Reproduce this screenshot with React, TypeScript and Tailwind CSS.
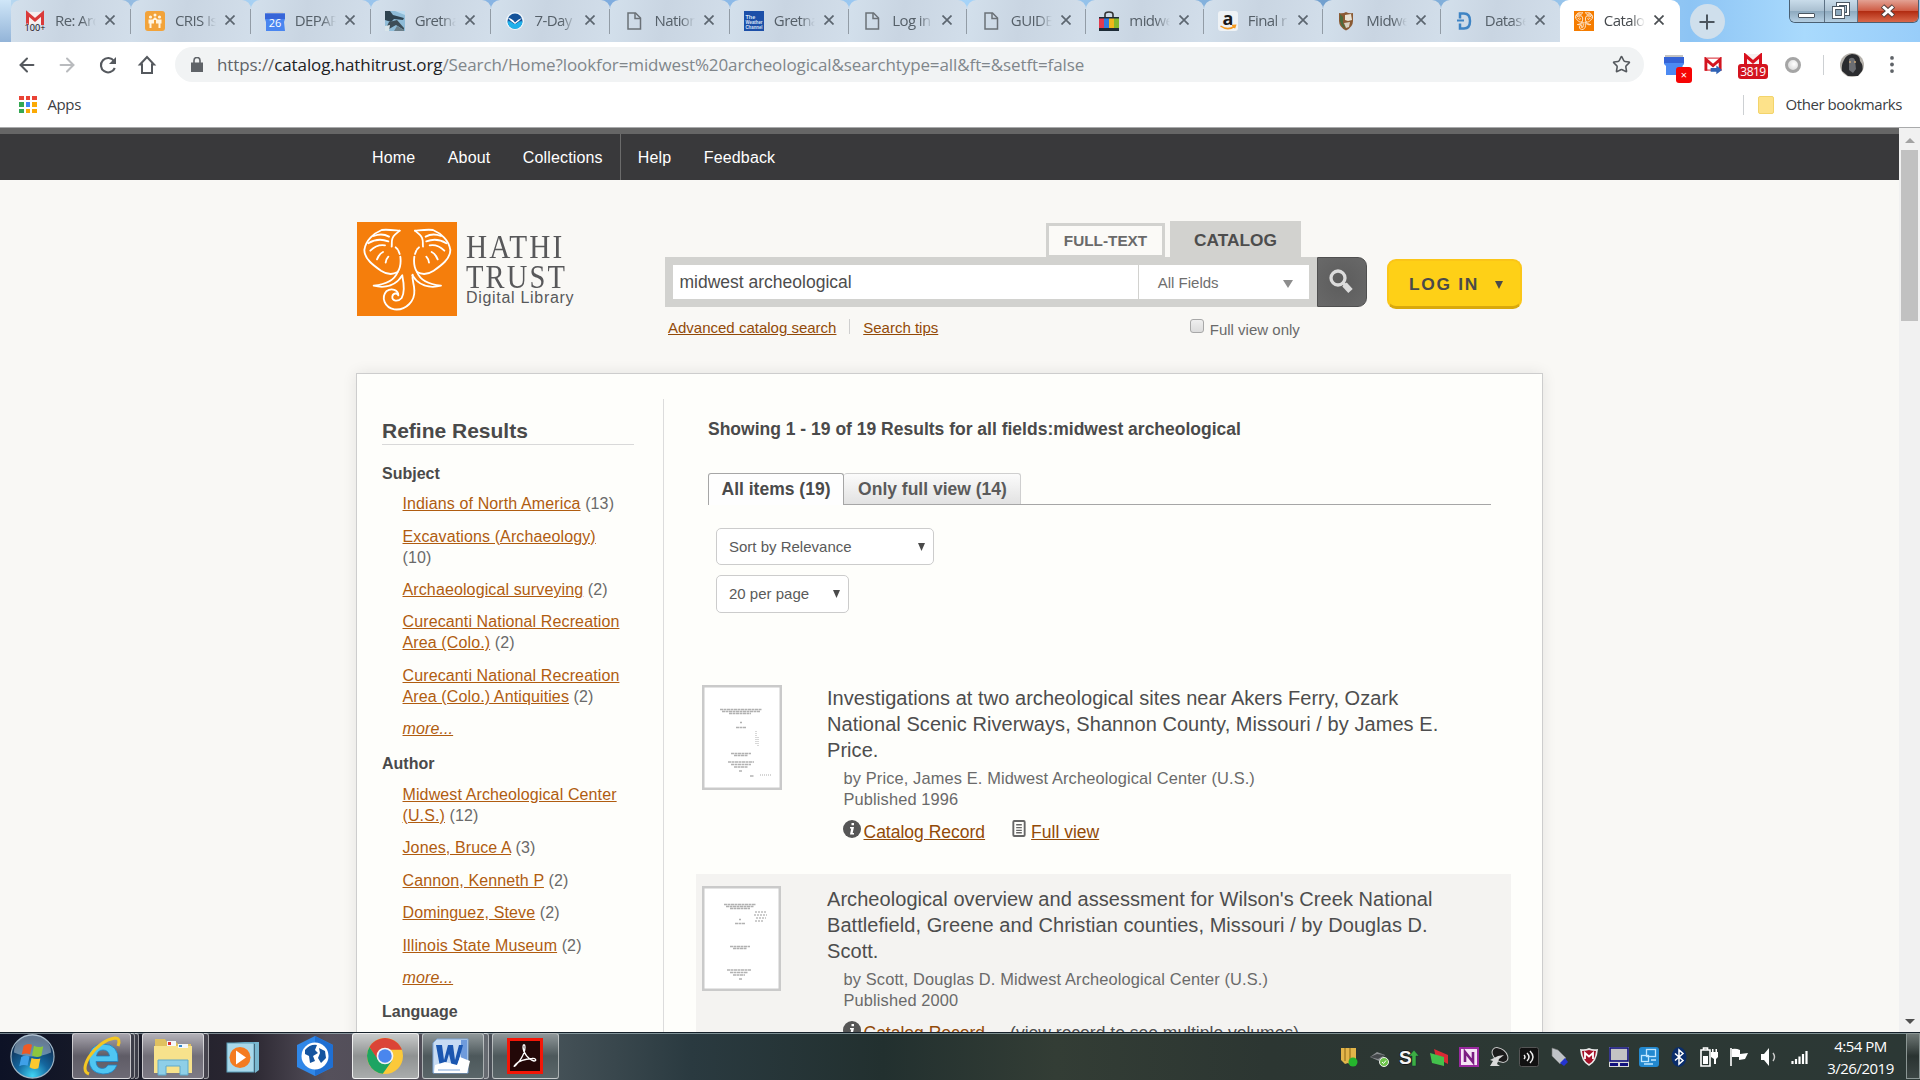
import React from "react";
import { ArrowLeft, ArrowRight, Star } from "lucide-react";

type Kids = { children?: React.ReactNode };

/* ---------- favicons ---------- */

const PageIcon = () => (
  <svg viewBox="0 0 20 20" className="size-5" fill="none" stroke="#6b7177" strokeWidth="1.5">
    <path d="M4 2h7.500l5 5v11h-12.500z" />
    <path d="M11 2v5.500h5.500" />
  </svg>
);

const Elephant = ({ w }: { w: number }) => (
  <g fill="none" stroke="#fff" strokeWidth={w} strokeLinecap="round" strokeLinejoin="round">
    <path d="M128 26 C105 24 90 22 74 24 C50 34 26 55 22 84 C22 112 52 132 72 146 C90 158 108 158 122 150 C130 138 132 120 130 104" />
    <path d="M128 26 L114 38 C100 50 106 62 104 74" />
    <path d="M50 42 Q75 32 96 44 M34 64 Q62 46 94 58 M40 86 Q60 66 84 70 M60 112 Q66 96 78 90 M86 122 Q88 110 94 104 M116 76 L122 82 M124 86 L128 96" />
    <path d="M174 26 C197 24 212 22 228 24 C252 34 276 55 280 84 C280 112 250 132 230 146 C212 158 194 158 180 150 C172 138 170 120 172 104" />
    <path d="M174 26 L188 38 C202 50 196 62 198 74" />
    <path d="M252 42 Q227 32 206 44 M268 64 Q240 46 208 58 M262 86 Q242 66 218 70 M242 112 Q236 96 224 90 M216 122 Q214 110 208 104 M186 76 L180 82 M178 86 L174 96" />
    <path d="M122 150 C112 176 80 188 50 191 C86 200 118 190 136 160" />
    <path d="M180 150 C190 176 222 188 252 191 C216 200 184 190 166 160" />
    <path d="M136 162 C142 190 142 214 134 228 C124 240 104 238 106 224 C108 212 120 212 124 220 C124 204 104 196 88 208 C72 226 82 256 112 262 C148 266 174 236 172 206 C172 184 164 176 167 158" />
  </g>
);

const ElephantFav = () => (
  <svg viewBox="0 0 300 282" preserveAspectRatio="none" className="size-5">
    <rect width="300" height="282" fill="#f57c00" />
    <g opacity=".85">
      <Elephant w={13} />
    </g>
  </svg>
);

const MailM = ({ c = "#d93a3a" }: { c?: string }) => (
  <>
    <rect x="1" y="1" width="18" height="13" fill="#f6f0f0" />
    <path d="M2.500 14V2.500L10 9l7.500-6.500V14" fill="none" stroke={c} strokeWidth="3" />
  </>
);

const favs: Record<string, React.ReactNode> = {
  mail: (
    <svg viewBox="0 0 20 20" className="size-5 overflow-visible">
      <MailM />
      <text x="-0.500" y="19.500" fontSize="9.500" fontFamily="Open Sans" fill="#111" textLength="21" lengthAdjust="spacingAndGlyphs" stroke="#dde" strokeWidth="1" paintOrder="stroke">100+</text>
    </svg>
  ),
  cris: (
    <svg viewBox="0 0 20 20" className="size-5">
      <rect width="20" height="20" rx="3" fill="#f2a33a" />
      <g fill="#fff4df">
        <circle cx="5.500" cy="6" r="1.600" /><circle cx="10" cy="4" r="1.500" /><circle cx="14.500" cy="6" r="1.600" />
        <path d="M3.500 8.500h4l2-2h1l2 2h4v4h-1V17h-2v-4.500h-2.500V9h-2v3.500H6.500V17h-2v-4.500h-1z" />
      </g>
    </svg>
  ),
  cal: (
    <svg viewBox="0 0 20 20" className="size-5">
      <path d="M2 1h16v2H2z" fill="#cfcfcf" />
      <path d="M0 2.500h20V8l-1 3 1 9H1V11L0 8z" fill="#4a86f0" />
      <path d="M0 2.500h20V8H0z" fill="#3765d8" />
      <text x="10" y="15.500" textAnchor="middle" fontSize="11" fontFamily="Open Sans" fill="#fff">26</text>
    </svg>
  ),
  photo: (
    <svg viewBox="0 0 20 20" className="size-5">
      <rect width="20" height="20" fill="#8fbcd8" />
      <path d="M0 0h5l3 4 11 3-1 2-9-1-3 3-6-2z" fill="#2f4350" />
      <path d="M4 11l8-2 7 8v2l-8-5-7 4-4 1z" fill="#3d4d57" />
      <path d="M12 15l7 4v1H9z" fill="#6b7f89" /><path d="M0 15l5-1-1 6H0z" fill="#d9e5ea" /><path d="M10 0h10v4z" fill="#bddcf0" />
    </svg>
  ),
  noaa: (
    <svg viewBox="0 0 20 20" className="size-5">
      <circle cx="10" cy="10" r="9" fill="#eef6fb" /><circle cx="10" cy="10" r="7.500" fill="#14539a" />
      <path d="M2.500 10.500C6 9 8 13 10 13s4-4 7.500-2.500A7.500 7.500 0 0 1 2.500 10.500z" fill="#1fb0ea" />
      <path d="M3 7q4 0 7 4.500Q13 8 17 7l-3 3-4 3-4-3z" fill="#fff" />
    </svg>
  ),
  page: <PageIcon />,
  weather: (
    <svg viewBox="0 0 20 20" className="size-5">
      <rect width="20" height="20" fill="#1c4fa8" />
      <g fontSize="5.500" fontWeight="bold" fontFamily="Liberation Sans" fill="#d8e4f6">
        <text x="1.500" y="8">The</text><text x="1.500" y="13" textLength="17" lengthAdjust="spacingAndGlyphs">Weather</text><text x="1.500" y="18" textLength="17" lengthAdjust="spacingAndGlyphs">Channel</text>
      </g>
    </svg>
  ),
  ebay: (
    <svg viewBox="0 0 20 20" className="size-5">
      <path d="M6 7V3.500Q6 1 10 1t4 2.500V7" fill="none" stroke="#333" strokeWidth="1.600" />
      <path d="M0 6h20v3H0z" fill="#1d2b36" /><path d="M0 7.500h5V17H0z" fill="#e23b4e" /><path d="M5 7.500h5V17H5z" fill="#2f7ae0" />
      <path d="M10 7.500h5V17h-5z" fill="#efb71b" /><path d="M15 7.500h5V17h-5z" fill="#86b82c" /><path d="M0 17h20v3H0z" fill="#1d2b36" />
    </svg>
  ),
  amazon: (
    <svg viewBox="0 0 20 20" className="size-5">
      <rect width="20" height="20" rx="3" fill="#eef2f5" />
      <text x="10" y="14" textAnchor="middle" fontSize="18" fontWeight="bold" fontFamily="Open Sans" fill="#1a1a1a">a</text>
      <path d="M2.500 15q7 5 14 .5M14 14.500l3.500-.2-1 3" fill="none" stroke="#f59a1f" strokeWidth="1.500" />
    </svg>
  ),
  nps: (
    <svg viewBox="0 0 20 20" className="size-5">
      <path d="M3 2q4 1 7-1 3 2 7 1v8q0 6-7 9.500Q3 16 3 10z" fill="#8a5a33" />
      <path d="M9 4l6-1 1 6-4 1-3-1z" fill="#e9e3d5" /><path d="M4 3l3 3v6l3 6-4-3-2-5z" fill="#4c6b3c" /><path d="M8 12l6-1-1 5-3 1z" fill="#d8d1c0" />
    </svg>
  ),
  data: (
    <svg viewBox="0 0 20 20" className="size-5" fill="none" stroke="#3f84c4" strokeWidth="2.500">
      <path d="M5 7.500V2.500h4q6 0 6 7.500t-6 7.500H5v-5" /><path d="M2 9.500h7" strokeWidth="2" />
    </svg>
  ),
  hathi: <ElephantFav />,
};

const tabs: [string, string][] = [
  ["mail", "Re: Arc"], ["cris", "CRIS Is."], ["cal", "DEPAR"], ["photo", "Gretna"], ["noaa", "7-Day"], ["page", "Nation"],
  ["weather", "Gretna"], ["page", "Log in"], ["page", "GUIDE"], ["ebay", "midwe"], ["amazon", "Final r"], ["nps", "Midwe"], ["data", "Datase"],
];

const TabX = ({ dark }: { dark?: boolean }) => (
  <svg viewBox="0 0 10 10" className="size-[10px] shrink-0" stroke={dark ? "#4a4e52" : "#5c6670"} strokeWidth="1.700">
    <path d="M.5.5l9 9M9.500.5l-9 9" />
  </svg>
);

const TabBody = ({ icon, text, active }: { icon: string; text: string; active?: boolean }) => (
  <>
    {favs[icon]}
    <span className={active
      ? "ml-[10px] w-[41px] overflow-hidden whitespace-nowrap text-[15px] tracking-[-0.6px] text-[#45494d] [mask-image:linear-gradient(90deg,#000_65%,transparent)]"
      : "ml-[10px] w-[41px] overflow-hidden whitespace-nowrap text-[15px] tracking-[-0.6px] text-[#566069] [mask-image:linear-gradient(90deg,#000_65%,transparent)]"}>
      {text}
    </span>
    <span className="ml-[9px] pb-px"><TabX dark={active} /></span>
  </>
);

const TabStrip = () => (
  <div className="relative flex h-[42px] bg-[linear-gradient(90deg,#bcdcf3_0,#8fb6dd_5%,#a9d3f5_14%,#7ba8dc_30%,#a6d4f9_50%,#6f9dcc_70%,#a0cdf2_84%,#8dc4f4_88%,#a9dafd_94%,#98cdf9_100%)] font-['Open_Sans',sans-serif]">
    <div className="w-[11px] shrink-0 bg-[linear-gradient(#cfe6f8,#93b4d8)]" />
    {tabs.map(([icon, t], i) => (
      <div key={i} className={i < 6
        ? "relative flex h-[42px] w-[119.900px] shrink-0 items-center rounded-t-[9px] bg-[linear-gradient(100deg,#d3e0ec,#c9d5e2_45%,#d2deea)] pb-px pl-[14px]"
        : "relative flex h-[42px] w-[118.500px] shrink-0 items-center rounded-t-[9px] bg-[linear-gradient(100deg,#d3e0ec,#c9d5e2_45%,#d2deea)] pb-px pl-[13.500px]"}>
        <TabBody icon={icon} text={t} />
        {i < 12 && <div className="absolute top-[9px] right-0 h-[25px] w-px bg-[#929ca6]" />}
      </div>
    ))}
    <div className="flex h-[42px] w-[120px] shrink-0 items-center rounded-t-[9px] bg-white pb-px pl-[14px]">
      <TabBody icon="hathi" text="Catalog" active />
    </div>
    <div className="mt-1 ml-[10px] flex size-[35px] items-center justify-center rounded-full bg-[#cfdfec]">
      <svg viewBox="0 0 16 16" className="size-4" stroke="#4b555e" strokeWidth="2"><path d="M8 .5v15M.5 8h15" /></svg>
    </div>
    <div className="ml-[64px] flex h-[23px] overflow-hidden rounded-b-[6px] border border-t-0 border-[#4a6073]">
      <div className="flex w-[35px] items-end justify-center border-r border-[#5d7285] bg-[linear-gradient(#c9dcea,#a9bfd0_50%,#8da9be_51%,#b5cfe2)] pb-1">
        <div className="h-[5px] w-[17px] rounded-[1px] border border-[#4a5661] bg-white" />
      </div>
      <div className="flex w-[33px] items-center justify-center border-r border-[#5d7285] bg-[linear-gradient(#c9dcea,#a9bfd0_50%,#8da9be_51%,#b5cfe2)] pb-px">
        <svg viewBox="0 0 18 17" className="h-[17px] w-[18px]" fill="none">
          <path d="M6 2h10v10H6z" stroke="#4a5661" strokeWidth="4" /><path d="M6 2h10v10H6z" stroke="#fff" strokeWidth="2" />
          <path d="M2 6h9v9H2z" fill="#8da9be" stroke="#4a5661" strokeWidth="4" /><path d="M2 6h9v9H2z" stroke="#fff" strokeWidth="2.200" />
        </svg>
      </div>
      <div className="flex w-[60px] items-center justify-center bg-[linear-gradient(#e3a294,#cf5d46_48%,#b22c12_52%,#d9684a)]">
        <svg viewBox="0 0 16 14" className="h-[14px] w-4">
          <path d="M2.500 2l11 10M13.500 2l-11 10" stroke="#55423f" strokeWidth="5" /><path d="M3 2.500l10 9M13 2.500l-10 9" stroke="#fff" strokeWidth="3" />
        </svg>
      </div>
    </div>
  </div>
);

const Toolbar = () => (
  <div className="flex h-[45px] items-center bg-white pl-[16px]">
    <ArrowLeft className="size-[22px] text-[#55595e]" strokeWidth={2.200} />
    <ArrowRight className="ml-[18px] size-[22px] text-[#b9bbbe]" strokeWidth={2.200} />
    <svg viewBox="0 0 20 20" className="ml-[20px] size-5" fill="none" stroke="#55595e" strokeWidth="2.100">
      <path d="M16.800 13A7.200 7.200 0 1 1 16 6" /><path d="M18 2v7h-7z" fill="#55595e" stroke="none" />
    </svg>
    <svg viewBox="0 0 20 20" className="ml-[19px] size-5" fill="none" stroke="#55595e" strokeWidth="2">
      <path d="M3 9.500L10 2l7 7.500H15V18H5V9.500z" />
    </svg>
    <div className="ml-[18px] flex h-[35px] w-[1469px] items-center rounded-full bg-[#f1f3f4] pl-4">
      <svg viewBox="0 0 12 15" className="h-[15px] w-3"><path d="M0 5.500h12V15H0z" fill="#5f6368" /><path d="M3 6V3.500a3 3 0 0 1 6 0V6" fill="none" stroke="#5f6368" strokeWidth="1.600" /></svg>
      <span className="ml-[14px] w-[1395px] whitespace-nowrap font-['Open_Sans',sans-serif] text-[17px] tracking-[-0.100px] text-[#80868b]">
        <span className="text-[#5f6368]">https://</span><span className="text-[#202124]">catalog.hathitrust.org</span>/Search/Home?lookfor=midwest%20archeological&amp;searchtype=all&amp;ft=&amp;setft=false
      </span>
      <Star className="size-[19px] shrink-0 text-[#55595e]" strokeWidth={2} />
    </div>
    <div className="relative ml-5 h-7 w-7">
      <svg viewBox="0 0 20 20" className="mt-[4px] size-5"><path d="M1 0h18v3H1z" fill="#c3c3c3" /><path d="M0 2h20v7l-1.500 2v9H2v-9L0 9z" fill="#4c8af2" /><path d="M0 2h20v6H0z" fill="#3563d6" /></svg>
      <div className="absolute top-[16px] left-[12px] flex size-[16px] items-center justify-center rounded-[3px] bg-[#f60404] font-['Open_Sans'] text-[11px] leading-none text-white">×</div>
    </div>
    <svg viewBox="0 0 20 18" className="mt-[2px] ml-[12px] h-[18px] w-[19px]">
      <rect x="1" y=".5" width="17" height="13" fill="#fff" /><path d="M2 14V2l7.500 6.500L17 2v12" fill="none" stroke="#d3141f" strokeWidth="3" /><path d="M1 .7h17M1 13.300h10" stroke="#d3141f" strokeWidth="1" />
      <path d="M7 11h6V8.500l6 4.700-6 4.500V15H7z" fill="#2f62b5" />
    </svg>
    <div className="relative ml-[15px] h-[24px] w-[30px]">
      <svg viewBox="0 0 20 14" className="ml-[5px] h-[14px] w-5"><MailM c="#d9101d" /></svg>
      <div className="absolute top-[11px] left-0 h-[15px] w-[30px] rounded-[3px] bg-[#d3141f] text-center font-['Open_Sans'] text-[12px] leading-[15px] tracking-[-0.500px] text-white">3819</div>
    </div>
    <div className="ml-[17px] h-4 w-4 rounded-full border-[3px] border-[#a5a5a5] bg-[radial-gradient(circle_at_60%_40%,#fff,#cfcfcf)]" />
    <div className="ml-[22px] h-5 w-px bg-[#cdd0d3]" />
    <svg viewBox="0 0 24 24" className="ml-4 size-6">
      <circle cx="12" cy="12" r="12" fill="#b5b1ab" /><path d="M2 18Q1 12 4 7 6 2 12 1q8 0 8 7 4 5 2 10l-4 5H8z" fill="#2b2c2f" />
      <path d="M9 6q4-3 6 1l1 9-3 4-4-3z" fill="#6b6d72" /><circle cx="10" cy="9" r="1" fill="#c9a77a" /><circle cx="15" cy="9" r="1" fill="#c9a77a" />
    </svg>
    <svg viewBox="0 0 4 18" className="ml-[26px] h-[17px] w-1" fill="#5f6368"><circle cx="2" cy="2" r="2" /><circle cx="2" cy="9" r="2" /><circle cx="2" cy="16" r="2" /></svg>
  </div>
);

const appDots = ["bg-[#ea4335]", "bg-[#ea4335]", "bg-[#ea4335]", "bg-[#34a853]", "bg-[#4285f4]", "bg-[#fbaa05]", "bg-[#34a853]", "bg-[#fbaa05]", "bg-[#fbaa05]"];

const Bookmarks = () => (
  <div className="flex h-[40px] items-center bg-white pr-[18px] pb-[5px] pl-[19px] font-['Open_Sans',sans-serif] text-[15px] text-[#3c4043]">
    <div className="grid grid-cols-3 gap-[2px]">
      {appDots.map((c, i) => <div key={i} className={`size-[4.500px] ${c}`} />)}
    </div>
    <span className="ml-[11px] tracking-[-0.400px]">Apps</span>
    <div className="ml-auto h-5 w-px bg-[#cdd0d3]" />
    <div className="mr-[12px] ml-[14px] h-[18px] w-4 rounded-[2px] border border-[#f3d46b] bg-[#fde28a]" />
    <span className="whitespace-nowrap tracking-[-0.450px]">Other bookmarks</span>
  </div>
);

/* ---------- catalog page ---------- */

const NavItem = ({ children }: Kids) => <span className="mr-[32.500px] text-white">{children}</span>;

const Header = () => (
  <div className="flex h-[193px] pt-[42px] pl-[357px]">
    <div className="flex w-[308px]">
      <svg viewBox="0 0 300 282" preserveAspectRatio="none" className="h-[94px] w-[100px]">
        <rect width="300" height="282" fill="#f57e0c" />
        <Elephant w={5.500} />
      </svg>
      <div className="ml-[9px] whitespace-nowrap pt-[10px] text-[#58585a]">
        <div className="h-[30px] w-[100px] origin-left [transform:scaleX(0.86)] font-['Liberation_Serif',serif] text-[34px] leading-[30px] tracking-[2.500px]">HATHI</div>
        <div className="h-[29px] w-[100px] origin-left [transform:scaleX(0.84)] font-['Liberation_Serif',serif] text-[34px] leading-[29px] tracking-[2.500px]">TRUST</div>
        <div className="h-[14px] text-[16px] leading-[14px] tracking-[0.700px]">Digital Library</div>
      </div>
    </div>
    <div className="w-[702px]">
      <div className="flex h-[35px] items-end pl-[381px] font-bold">
        <div className="flex h-[34px] w-[119px] items-center justify-center border-3 border-b-2 border-[#d2d2cf] bg-[#fbfaf7] pt-px text-[15.300px] text-[#6a6a6a]">FULL-TEXT</div>
        <div className="ml-[5px] flex h-9 w-[131px] items-center justify-center bg-[#d2d2cf] pt-[3px] text-[17.300px] text-[#4d4d4d]">CATALOG</div>
      </div>
      <div className="flex">
        <div className="flex h-[50px] w-[652px] bg-[#d2d2cf] p-2">
          <div className="flex h-[34px] w-[466px] items-center bg-white pl-[6.500px] text-[17.500px] text-[#4d4d4d]">midwest archeological</div>
          <div className="ml-px flex h-[34px] w-[170px] items-center bg-white pt-[2px] pr-4 pl-[18.500px] text-[15px] text-[#6e6e6e]">
            All Fields
            <svg viewBox="0 0 10 8" className="mt-px ml-auto h-2 w-[10px]"><path d="M0 0h10L5 8z" fill="#8d8d8d" /></svg>
          </div>
        </div>
        <div className="flex h-[50px] w-[50px] justify-center rounded-r-[9px] border border-[#505050] bg-[radial-gradient(#5c5c5c,#696969)] pt-[11px] pr-[2px]">
          <svg viewBox="0 0 26 26" className="size-[26px]" fill="none" stroke="#dcdcdc">
            <circle cx="10" cy="9" r="7" strokeWidth="3.300" /><path d="M15 14l2 2" strokeWidth="3.500" /><path d="M16.500 15.500l6 6.500" strokeWidth="6" />
          </svg>
        </div>
      </div>
      <div className="flex pt-[12px] text-[15px] leading-[17px]">
        <span className="ml-[3px] text-[#924a08] underline">Advanced catalog search</span>
        <span className="mx-[12.900px] h-[15px] w-px bg-[#cfcfcf]" />
        <span className="text-[#924a08] underline">Search tips</span>
        <span className="ml-[251.500px] h-[14px] w-[14px] rounded-[3px] border border-[#a8a8a8] bg-[linear-gradient(#efefef,#dcdcdc)]" />
        <span className="mt-[2px] ml-[6px] text-[#6a6a6a]">Full view only</span>
      </div>
    </div>
    <div className="mt-[37px] ml-5 flex h-[50px] w-[135px] items-center rounded-[9px] border-2 border-b-[3px] border-[#fbc617] border-b-[#d9a90c] bg-[#fed017] pt-[2px] pl-5 text-[17.400px] font-bold tracking-[1.700px] text-[#4a4a4a]">
      LOG IN
      <svg viewBox="0 0 8 8" className="ml-[16px] size-2"><path d="M0 0h8L4 8z" fill="#4a4a4a" /></svg>
    </div>
  </div>
);

type Facet = [lines: string[], count: string, own?: boolean];

const subjects: Facet[] = [
  [["Indians of North America"], "(13)"],
  [["Excavations (Archaeology)"], "(10)", true],
  [["Archaeological surveying"], "(2)"],
  [["Curecanti National Recreation", "Area (Colo.)"], "(2)"],
  [["Curecanti National Recreation", "Area (Colo.) Antiquities"], "(2)"],
];
const authors: Facet[] = [
  [["Midwest Archeological Center", "(U.S.)"], "(12)"],
  [["Jones, Bruce A"], "(3)"],
  [["Cannon, Kenneth P"], "(2)"],
  [["Dominguez, Steve"], "(2)"],
  [["Illinois State Museum"], "(2)"],
];

const FacetList = ({ title, items }: { title: string; items: Facet[] }) => (
  <div className="leading-[21px]">
    <div className="mb-[9.800px] font-bold text-[#4a4a4a]">{title}</div>
    <ul className="flex flex-col gap-[11.400px] pl-[20.500px]">
      {items.map(([lines, n, own], i) => (
        <li key={i} className="whitespace-nowrap tracking-[0.120px] text-[#6a6a6a]">
          <a className="text-[#b05c10] underline">{lines.map((l, k) => <React.Fragment key={k}>{k > 0 && <br />}{l}</React.Fragment>)}</a>
          {own ? <br /> : " "}{n}
        </li>
      ))}
      <li className="tracking-[0.120px] text-[#b05c10] italic underline">more...</li>
    </ul>
  </div>
);

const Select = ({ children, wide }: Kids & { wide?: boolean }) => (
  <div className={wide
    ? "flex h-[37px] w-[218px] items-center rounded-[5px] border border-[#ccc] bg-white pt-px pr-[8px] pl-3 text-[15px] text-[#5a5a5a]"
    : "flex h-[38px] w-[133px] items-center rounded-[5px] border border-[#ccc] bg-white pr-[8px] pl-3 text-[15px] text-[#5a5a5a]"}>
    {children}
    <svg viewBox="0 0 8 8" className="mb-px ml-auto h-2 w-[7px]" preserveAspectRatio="none"><path d="M0 0h8L4 8z" fill="#4a4a4a" /></svg>
  </div>
);

const Scribble = ({ v }: { v: number }) => (
  <svg viewBox="0 0 80 105" className="h-[105px] w-20 shrink-0">
    <rect x="1.250" y="1.250" width={v === 1 ? 77.5 : 76.5} height="102.500" fill="#fff" stroke="#cacaca" strokeWidth="2.500" />
    {v === 1 ? (
      <g stroke="#888" strokeWidth="1.400" strokeDasharray="3 .5" opacity=".65">
        <path d="M18 24.500h42M20 26.500h38M27 28.500h22M38 37.500h2M34 42.500h10M29 68.500h20M32 70.500h14M26 77h26M29 79.500h20M32 82h14M37 86h3M48 91h4" />
        <path d="M54 46v14M56 52v9M58 90h12" stroke="#aaa" strokeDasharray="1 1" />
      </g>
    ) : (
      <g stroke="#888" strokeWidth="1.400" strokeDasharray="3 .5" opacity=".65">
        <path d="M22 18.500h32M24 20.500h28M28 22.500h20M37 33.500h2M33 37.500h10M28 60.500h20M31 62.500h14M25 84h24M28 86.500h18M31 89h12M37 93h3" />
        <path d="M53 26h12M52 29h13M54 32h10M53 35h8" stroke="#999" strokeDasharray="2 1" />
      </g>
    )}
  </svg>
);

const InfoIcon = () => (
  <svg viewBox="0 0 18 18" className="size-[18px]"><circle cx="9" cy="9" r="9" fill="#565656" /><path d="M8.500 3h2.500v2.300H8.500zM7 7h4l-1.300 6H11v1.500H7L8.200 8.500H7z" fill="#fff" /></svg>
);

const Result = ({ v, title, by, year, extra, className }: { v: number; title: string[]; by: string; year: string; extra: React.ReactNode; className: string }) => (
  <div className={className}>
    <Scribble v={v} />
    <div className="ml-[45px] whitespace-nowrap">
      <div className="text-[20px] leading-[26px] tracking-[0.055px] text-[#4d4d4d]">{title.map((t) => <div key={t}>{t}</div>)}</div>
      <div className="mt-[5px] ml-[16.500px] text-[16.400px] leading-[21px] tracking-[0.130px] text-[#6a6a6a]">
        <div>{by}</div>
        <div>{year}</div>
      </div>
      <div className="mt-[9.500px] ml-[15.500px] flex text-[17.500px] leading-[24px]">
        <InfoIcon />
        <a className="ml-[3px] text-[#924a08] underline">Catalog Record</a>
        {extra}
      </div>
    </div>
  </div>
);

const CatalogPage = () => (
  <div className="h-full min-w-0 flex-1 overflow-hidden bg-[#f9f8f5] font-['Liberation_Sans',Arial,sans-serif] text-[16px]">
    <div className="flex h-[52px] items-center border-t-[6px] border-[#666] bg-[#39393b] pl-[372px] tracking-[0.150px]">
      <div className="flex pt-[2px]">
        <NavItem>Home</NavItem>
        <NavItem>About</NavItem>
        <span className="text-white">Collections</span>
      </div>
      <div className="mr-[17px] ml-[17px] h-full w-px bg-[#6b6b6b]" />
      <div className="flex pt-[2px]">
        <NavItem>Help</NavItem>
        <NavItem>Feedback</NavItem>
      </div>
    </div>
    <Header />
    <div className="ml-[356px] flex h-[720px] w-[1187px] border border-[#cdcdcd] bg-[#fefefb] pt-[25px] shadow-[0_0_14px_rgba(0,0,0,0.09)]">
      <div className="w-[307px] border-r border-[#dcdcdc] pl-[25px]">
        <div className="mb-[17.500px] h-[46px] w-[252px] border-b border-[#d9d9d9] pt-[19px] text-[21px] leading-[26px] font-bold text-[#4a4a4a]">Refine Results</div>
        <FacetList title="Subject" items={subjects} />
        <div className="h-[14px]" />
        <FacetList title="Author" items={authors} />
        <div className="pt-[13.200px] leading-[21px] font-bold text-[#4a4a4a]">Language</div>
      </div>
      <div className="pt-[18px] pl-[32px]">
        <div className="pl-[12px] text-[17.500px] leading-[24px] font-bold text-[#4a4a4a]">Showing 1 - 19 of 19 Results for all fields:midwest archeological</div>
        <div className="mt-[32px] ml-[12px] flex h-[32px] w-[783px] items-end border-b border-[#a6a6a6] text-[17.500px] font-bold">
          <div className="-mb-px flex h-[32px] w-[136px] items-center justify-center rounded-t-[3px] border border-b-0 border-[#a6a6a6] bg-[#fefefe] whitespace-nowrap text-[#4a4a4a]">All items (19)</div>
          <div className="flex h-[31px] w-[177px] items-center justify-center rounded-t-[3px] border border-b-0 border-l-0 border-[#cfcfcf] bg-[linear-gradient(#fbfbfb,#e2e2e2)] pl-px whitespace-nowrap text-[#5a5a5a]">Only full view (14)</div>
        </div>
        <div className="mt-[23px] ml-[20px] flex flex-col gap-[10px]">
          <Select wide>Sort by Relevance</Select>
          <Select>20 per page</Select>
        </div>
        <Result v={1} className="mt-[62px] flex h-[199px] pt-[10px] pl-[6px]"
          title={["Investigations at two archeological sites near Akers Ferry, Ozark", "National Scenic Riverways, Shannon County, Missouri / by James E.", "Price."]}
          by="by Price, James E. Midwest Archeological Center (U.S.)" year="Published 1996"
          extra={<>
            <svg viewBox="0 0 14 18" className="ml-[27px] h-[17px] w-[14px]" fill="none" stroke="#666"><rect x="1" y="1" width="12" height="16" rx="1" strokeWidth="2" /><path d="M4 5h6M4 8h6M4 11h6M4 13.500h6" strokeWidth="1.400" /></svg>
            <a className="ml-[5px] text-[#924a08] underline">Full view</a>
          </>} />
        <Result v={2} className="flex h-[240px] w-[815px] bg-[#f4f3f1] pt-3 pl-[6px]"
          title={["Archeological overview and assessment for Wilson's Creek National", "Battlefield, Greene and Christian counties, Missouri / by Douglas D.", "Scott."]}
          by="by Scott, Douglas D. Midwest Archeological Center (U.S.)" year="Published 2000"
          extra={<span className="ml-[25px] text-[#4d4d4d]">(view record to see multiple volumes)</span>} />
      </div>
    </div>
  </div>
);

const Scrollbar = () => (
  <div className="flex w-[21px] shrink-0 flex-col items-center bg-[#f1f1f1]">
    <svg viewBox="0 0 10 5" className="mt-[10px] h-[5px] w-[10px]"><path d="M0 5h10L5 0z" fill="#a3a3a3" /></svg>
    <div className="mt-[7px] h-[171px] w-[17px] bg-[#c1c1c1]" />
    <svg viewBox="0 0 10 5" className="mt-auto mb-2 h-[5px] w-[10px]"><path d="M0 0h10L5 5z" fill="#505050" /></svg>
  </div>
);

/* ---------- taskbar ---------- */

const TaskButton = ({ children, className }: Kids & { className: string }) => (
  <div className={`flex h-[46px] shrink-0 items-center justify-center rounded-[3px] border ${className}`}>{children}</div>
);

const Stack = ({ className }: { className: string }) => (
  <div className={`h-[46px] rounded-r-[3px] border border-l-0 border-white/50 bg-white/15 ${className}`} />
);

const N = "size-5";
const tray: React.ReactNode[] = [
  <svg viewBox="0 0 20 20" className={N}><path d="M2 1h15v12l-4 6-4-3-3 1-4-4z" fill="#e3b54a" /><path d="M6 1v13M11 1v14" stroke="#8a6412" strokeWidth="1" /><circle cx="14" cy="15" r="4.500" fill="#25b52d" /></svg>,
  <svg viewBox="0 0 20 20" className={N}><path d="M1 10l7-5 8 3-6 6z" fill="#8b8f92" /><path d="M1 10l7-3 8 1-7 4z" fill="#44484b" /><circle cx="15" cy="15" r="4.500" fill="#6cc24a" stroke="#eee" /><path d="M13 15l1.500 1.500 2.500-3" fill="none" stroke="#fff" /></svg>,
  <svg viewBox="0 0 20 20" className={N}><text x="0" y="17" fontSize="19" fontWeight="bold" fontFamily="Liberation Sans" fill="#f4f4f4" stroke="#111" strokeWidth="1.500" paintOrder="stroke">S</text><path d="M15 3l5 6h-3v10h-4V9h-3z" fill="#3cae43" stroke="#133" strokeWidth=".5" /></svg>,
  <svg viewBox="0 0 20 20" className={N}><path d="M5 2l14 6v9L7 11z" fill="#d92a35" /><path d="M1 6l14 4v9L3 16z" fill="#43c14c" /></svg>,
  <svg viewBox="0 0 20 20" className={N}><rect x="1" y="1" width="18" height="18" fill="#f5e4f5" stroke="#9a2aa0" strokeWidth="2" /><path d="M6 15V5l8 10V5" fill="none" stroke="#7b1d82" strokeWidth="2.600" /></svg>,
  <svg viewBox="0 0 20 20" className={N}><ellipse cx="11" cy="8" rx="9" ry="6" transform="rotate(40 11 8)" fill="#1b1b1b" stroke="#ccc" /><path d="M9 9l6-1-5 4-2 5 3 2H1l3-5-3-1z" fill="#d9d9d9" /></svg>,
  <svg viewBox="0 0 20 20" className={N}><rect x=".5" y=".5" width="19" height="19" rx="2" fill="#111" stroke="#555" /><path d="M5 8q2 2 0 4M8 6q4 4 0 8M11 4q6 6 0 12" fill="none" stroke="#eee" strokeWidth="1.500" /></svg>,
  <svg viewBox="0 0 20 20" className={N}><path d="M3 1l6 2 8 8-6 6-8-8z" fill="#bfc3c7" stroke="#777" strokeWidth=".6" /><path d="M11 16l5-5 3 4-4 4z" fill="#2434d0" /></svg>,
  <svg viewBox="0 0 20 20" className={N}><path d="M1 2q5 1 9-1 4 2 9 1-1 13-9 17Q2 15 1 2z" fill="#e9e9e9" /><path d="M3 4q4 0 7-1 3 1 7 1-1 10-7 13Q4 14 3 4z" fill="#a5122a" /><path d="M6 12V6l4 3.500L14 6v6" fill="none" stroke="#fff" strokeWidth="1.800" /></svg>,
  <svg viewBox="0 0 20 20" className={N}><rect width="20" height="20" fill="#d8d8d8" /><rect x="1" y="1" width="18" height="13" fill="#c4c4c4" stroke="#10107c" strokeWidth="1.600" /><path d="M1 16h8v3H1zM11 16h8v3h-8z" fill="#10107c" /></svg>,
  <svg viewBox="0 0 20 20" className={N}><rect width="20" height="20" rx="3" fill="#2389d0" /><g fill="none" stroke="#bfe6ff" strokeWidth="1.300"><rect x="7.500" y="2.500" width="9" height="7" /><rect x="2.500" y="8.500" width="7" height="6" /><path d="M12 13h5M5 17h9" /></g></svg>,
  <svg viewBox="0 0 20 20" className={N}><ellipse cx="10" cy="10" rx="7.500" ry="10" fill="#0a2d6b" /><path d="M6 6.500l8 7-4 3.500V3l4 3.500-8 7" fill="none" stroke="#fff" strokeWidth="1.500" /></svg>,
  <svg viewBox="0 0 20 20" className={N}><path d="M2 3h9v16H2zM4.500 1h4v2h-4z" fill="none" stroke="#fff" strokeWidth="1.600" /><path d="M4 9h5v8H4z" fill="#fff" /><path d="M12 5h7v5l-2 2v5h-2v-5l-3-2zM13 2h1.500v3H13zM16.500 2H18v3h-1.500z" fill="#fff" /></svg>,
  <svg viewBox="0 0 20 20" className={N}><path d="M2 1v18" stroke="#fff" strokeWidth="1.600" /><path d="M3 2q4-1 8 1v4l8-1-3 6-6 1V10H3z" fill="#fff" /></svg>,
  <svg viewBox="0 0 20 20" className={N}><path d="M2 7h3l5-6v18l-5-6H2z" fill="#fff" /><path d="M14 6q3 4 0 8" fill="none" stroke="#ccc" strokeWidth="1.400" /></svg>,
  <svg viewBox="0 0 20 20" className={N}><path d="M3.500 17v-3M7 17v-5M10.500 17v-7.500M14 17V7M17.500 17V4" stroke="#fff" strokeWidth="2.200" /></svg>,
];

const Taskbar = () => (
  <div className="flex h-12 shrink-0 items-start border-t border-[#16212a] bg-[linear-gradient(90deg,#0d1226_0,#171a28_5%,#2b2731_13%,#55505b_17%,#4e4c56_23%,#48545a_28%,#2a3a40_36%,#22302f_46%,#333d35_55%,#2c3632_66%,#2c3834_80%,#2c3835_100%)] shadow-[inset_0_1px_0_rgba(170,190,195,0.65)]">
    <svg viewBox="0 0 48 48" className="ml-[9px] size-[47px]">
      <defs><radialGradient id="orb" cx=".5" cy=".95" r=".85"><stop offset="0" stopColor="#3fd5f5" /><stop offset=".45" stopColor="#14669e" /><stop offset="1" stopColor="#10284b" /></radialGradient></defs>
      <circle cx="24" cy="24" r="22" fill="url(#orb)" stroke="#9fb6c6" strokeWidth="1.200" />
      <path d="M5 20a19 19 0 0 1 38 0q-19 8-38 0z" fill="#cfdce6" opacity=".45" />
      <path d="M15 13q4-3 8.500-1l-2 10q-4-2-8.500 0z" fill="#ee5a24" /><path d="M25.500 13q4 2.500 9.500.5l-2 10q-5 2-9.500-.5z" fill="#8cc63e" />
      <path d="M12.500 24.500q4-2.500 8.500-.5l-2 9.500q-4-2-8.500.5z" fill="#3fa0e8" /><path d="M23 25.500q4 2 9 .5l-2 10q-5 2-9-1z" fill="#fdc82f" />
    </svg>
    <TaskButton className="ml-[16px] w-[59px] border-white/60 bg-[linear-gradient(#a7a4ad,#5f5c66_50%,#6d6a75)]">
      <svg viewBox="0 0 40 40" className="size-10">
        <path d="M35 29h-9q-2 3.500-5.500 3.500-6 0-6.500-7h22Q37 8 21 8 7 9 7 23t14 15q11 0 14-9zM14.500 20q1-6 6.500-6t6.500 6z" fill="#4fc6f2" fillRule="evenodd" stroke="#1c82c4" strokeWidth=".8" />
        <path d="M7 38Q-1 35 7 21 19 4 33 2q6 0 3 8" fill="none" stroke="#f3c623" strokeWidth="3" />
      </svg>
    </TaskButton>
    <Stack className="w-[4px]" /><Stack className="w-[4px]" />
    <TaskButton className="ml-[3px] w-[62px] border-white/60 bg-[linear-gradient(#b3b1b8,#716e78_50%,#7d7a85)]">
      <svg viewBox="0 0 40 40" className="size-10">
        <path d="M2 3h10l2 3h9l2 2h13v29H2z" fill="#e0c160" /><path d="M1 10h38v27H1z" fill="#f7e28c" /><path d="M14 5h9v5h-9zM25 8h10v4H25z" fill="#f4f7fa" /><path d="M15 6h3v3h-3z" fill="#d33" /><path d="M26 9h3v2h-3z" fill="#38c" />
        <path d="M5 39V24h30v15h-8v-9H13v9z" fill="#8ecfe8" stroke="#5ea9cb" />
      </svg>
    </TaskButton>
    <Stack className="w-[5px]" />
    <svg viewBox="0 0 34 34" className="mt-[7px] ml-[17px] size-[34px]"><path d="M8 2h25v28l-4 3V4z" fill="#79b8d0" /><rect x="1" y="3" width="27" height="29" fill="#a9d8ea" stroke="#5b9fba" /><circle cx="14" cy="17.500" r="10.500" fill="#f47b20" /><path d="M10 10.500l10 7-10 7z" fill="#fff" /></svg>
    <svg viewBox="0 0 36 40" className="mt-[3px] ml-[37px] h-10 w-9"><path d="M18 0l18 9v22l-18 9L0 31V9z" fill="#2f87e8" /><path d="M18 0l18 9v22l-18 9z" fill="#1f6fd2" /><circle cx="18" cy="20" r="13.500" fill="#fff" /><path d="M8 14q5-6 12-5l-2 5 3 3-5 3 2 5-5 2-1-7-4-2zM22 12l6 3 1 7-5 5-3-5 2-5z" fill="#15549f" /></svg>
    <TaskButton className="ml-[19px] w-[67px] border-white/80 bg-[linear-gradient(#c9cbcb,#8f9292_50%,#a9acac)]">
      <svg viewBox="0 0 40 40" className="-ml-px size-9">
        <circle cx="20" cy="20" r="20" fill="#fbc93a" />
        <path d="M2.700 10A20 20 0 0 1 37.300 10L20 11z" fill="#db4437" /><path d="M2.700 10h34.600q1 1.500 1.500 3H20L12 25z" fill="#db4437" />
        <path d="M2.700 10A20 20 0 0 0 17.500 39.800L28 25 12 24z" fill="#1da462" /><circle cx="20" cy="20" r="9.300" fill="#f4f4f4" /><circle cx="20" cy="20" r="7.500" fill="#4a86ee" />
      </svg>
    </TaskButton>
    <TaskButton className="ml-[3px] w-[62px] border-white/50 bg-[linear-gradient(#8f9799,#4d585b_50%,#5a6669)]">
      <svg viewBox="0 0 38 38" className="-ml-1 size-[38px]">
        <path d="M5 2h31v34H1V6z" fill="#c7dbf3" stroke="#7fa6d6" /><path d="M29 3l6 0v20h-6z" fill="#6f9bdc" />
        <path d="M4 8h6l2 15 4-15h5l2 15 4-15h4l-6 22h-5l-3-13-4 13H8z" fill="#1a56b0" /><path d="M3 28l10-3 12 3 3-8 10 4-3 12H2z" fill="#fff" /><path d="M6 33h22" stroke="#a9c3e6" strokeWidth="1.500" />
      </svg>
    </TaskButton>
    <Stack className="w-[5px]" />
    <TaskButton className="ml-[3px] w-[67px] border-white/50 bg-[linear-gradient(#8f9799,#4d585b_50%,#5a6669)]">
      <svg viewBox="0 0 36 36" className="-ml-px size-9"><rect x="1.500" y="1.500" width="33" height="33" fill="#230808" stroke="#f31607" strokeWidth="3" /><path d="M8 27c4-2 10-11 10-18 0-3-2-3-2 0 0 6 6 13 11 14 3 0 2-3-2-2.500C19 21 12 23 9 26c-3 3-2 3 0 1z" fill="none" stroke="#fff" strokeWidth="1.300" /></svg>
    </TaskButton>
    <div className="mt-[14px] ml-auto flex">
      {tray.map((t, i) => <div key={i} className="flex w-[30px] justify-center">{t}</div>)}
    </div>
    <div className="mt-[2px] w-[92px] pl-px text-center font-['Open_Sans',sans-serif] text-[15px] leading-[22px] tracking-[-0.500px] text-white">
      <div>4:54 PM</div>
      <div>3/26/2019</div>
    </div>
    <div className="h-[46px] w-[14px] border border-[#8b9694] bg-[linear-gradient(#6f7876,#2a3331_50%,#3c4644)]" />
  </div>
);

export default function App() {
  return (
    <div className="flex h-[1080px] w-[1920px] flex-col overflow-hidden">
      <TabStrip />
      <Toolbar />
      <Bookmarks />
      <div className="h-px shrink-0 bg-[#a9aaab]" />
      <div className="flex h-[904px] shrink-0">
        <CatalogPage />
        <Scrollbar />
      </div>
      <Taskbar />
    </div>
  );
}
